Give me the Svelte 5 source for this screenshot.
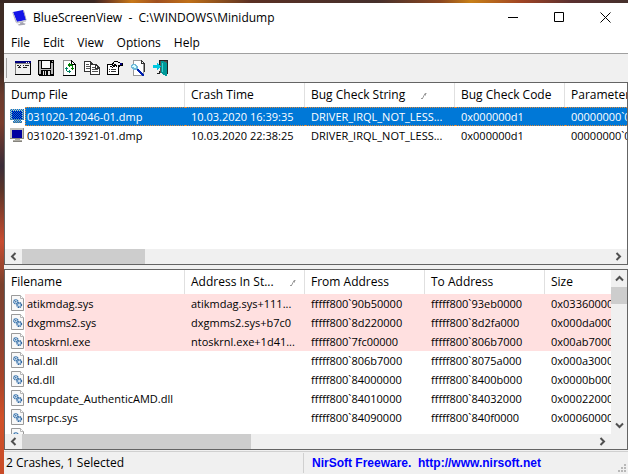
<script>
  const menus = ['File', 'Edit', 'View', 'Options', 'Help'];
  const tools = ['Advanced Options', 'Save', 'Refresh', 'Copy', 'Properties', 'Find', 'Exit'];
  const crashes = [
    ['031020-12046-01.dmp', '10.03.2020 16:39:35', 'DRIVER_IRQL_NOT_LESS...', '0x000000d1', '00000000`0'],
    ['031020-13921-01.dmp', '10.03.2020 22:38:25', 'DRIVER_IRQL_NOT_LESS...', '0x000000d1', '00000000`0']
  ];
  const modules = [
    ['atikmdag.sys', 'atikmdag.sys+111...', 'fffff800`90b50000', 'fffff800`93eb0000', '0x03360000', true],
    ['dxgmms2.sys', 'dxgmms2.sys+b7c0', 'fffff800`8d220000', 'fffff800`8d2fa000', '0x000da000', true],
    ['ntoskrnl.exe', 'ntoskrnl.exe+1d41...', 'fffff800`7fc00000', 'fffff800`806b7000', '0x00ab7000', true],
    ['hal.dll', '', 'fffff800`806b7000', 'fffff800`8075a000', '0x000a3000', false],
    ['kd.dll', '', 'fffff800`84000000', 'fffff800`8400b000', '0x0000b000', false],
    ['mcupdate_AuthenticAMD.dll', '', 'fffff800`84010000', 'fffff800`84032000', '0x00022000', false],
    ['msrpc.sys', '', 'fffff800`84090000', 'fffff800`840f0000', '0x00060000', false],
    ['', '', '', '', '', false]
  ];
  let selected = $state(0);
</script>

{#snippet sortMark()}
  <svg class="sort" width="6" height="6" viewBox="0 0 6 6" aria-hidden="true"><path d="M0 5.5h2M1.5 5.5L4 .5h1.5M4.5 .5v2" fill="none" stroke="#9a9a9a" /></svg>
{/snippet}

{#snippet chevron(d)}
  <svg width="9" height="9" viewBox="0 0 9 9" aria-hidden="true"><path {d} fill="none" stroke="#505050" stroke-width="2" /></svg>
{/snippet}

{#snippet screenIcon(on)}
  <svg class="ico" width="14" height="16" viewBox="0 0 14 16" shape-rendering="crispEdges" aria-hidden="true">
    <defs>
      <pattern id="dither" width="2" height="2" patternUnits="userSpaceOnUse"><path d="M0 0h1v1H0zM1 1h1v1H1z" fill="#0078d7" /></pattern>
    </defs>
    <path d="M0 1h14v11H0z" fill="#c4c2ba" /><path d="M13 1h1v11H0v-1h13z" fill="#8c8a84" />
    <path d="M2 3h10v8H2z" fill="#0000a0" />
    <path d="M5 12h5v1H5zM3 13h9v2H3z" fill="#b0aea6" /><path d="M3 14h9v1H3z" fill="#85837d" />
    {#if on}<path d="M0 1h14v11H12v3H3v-3H0z" fill="url(#dither)" />{/if}
  </svg>
{/snippet}

{#snippet fileIcon()}
  <svg class="ico file" width="13" height="16" viewBox="0 0 13 16" aria-hidden="true">
    <path d="M.5.5h9l3 3v12H.5z" fill="#f8f8f8" stroke="#9a9a9a" />
    <path d="M9.5.5v3h3" fill="#fff" stroke="#b5b5b5" />
    <circle cx="4.8" cy="6.8" r="2.1" fill="#d8e8f5" stroke="#3d76ad" stroke-width="1.4" stroke-dasharray="1.2 .5" />
    <circle cx="8.2" cy="10" r="2.3" fill="#a9c8e4" stroke="#3268a0" stroke-width="1.4" stroke-dasharray="1.2 .5" />
    <circle cx="4.8" cy="6.8" r=".7" fill="#23578c" /><circle cx="8.2" cy="10" r=".7" fill="#fff" />
  </svg>
{/snippet}

{#snippet toolIcon(i)}
  <svg width="16" height="16" viewBox="0 0 16 16" shape-rendering="crispEdges" aria-hidden="true">
    {#if i === 0}
      <path d="M0 1h16v14H0z" fill="#000" /><path d="M0 1h15v13H0z" fill="#808080" /><path d="M1 4h14v10H1z" fill="#f0f0f0" />
      <path d="M0 1h16v2H0z" fill="#000080" /><path d="M11 2h1v1h-1zM13 2h1v1h-1z" fill="#fff" />
      <path d="M2 5h2v1H2zM5 5h1v1H5zM3 7h1V6h1v1h1v1H3zM8 5h1v1H8zM10 5h4v1h-4zM8 7h4v1H8z" fill="#222" />
    {:else if i === 1}
      <path d="M0 0h16v16H1v-1H0z" fill="#000" /><path d="M1 1h2v13H1zM13 3h2v11h-2zM14 1h1v1h-1z" fill="#b8b8b8" />
      <path d="M4 1h8v7H4z" fill="#f8f8f8" /><path d="M3 9h10v1H3z" fill="#b8b8b8" />
      <path d="M10 11h2v4h-2zM5 11h1v4H5zM7 11h1v4H7z" fill="#ddd" />
    {:else if i === 2}
      <path d="M2 0h8v1H3v14H2z" fill="#909090" /><path d="M3 1h7v4h4v10H3z" fill="#fff" />
      <path d="M14 4h1v12H2v-1h12z" fill="#000" /><path d="M10 0h1v1h1v1h1v1h1v1h1v1h-5z" fill="#000" /><path d="M11 2h1v1h1v1h-2z" fill="#fff" />
      <path d="M8 3h1v1h2v1h1v3h1v1h-1v1h-1V9h-1V8h1V6H9v1H8V6H7V4h1z" fill="#008000" />
      <path d="M5 7h1v1h1v1H6v2h2v-1h1v1h1v1H9v1H8v-1H6v-1H5V9H4V8h1z" fill="#008060" />
    {:else if i === 3}
      <path d="M0 1h6l3 3v8H0z" fill="#333" /><path d="M1 2h5v3h2v6H1z" fill="#fff" /><path d="M2 4h3v1H2zM2 6h5v1H2zM2 8h5v1H2z" fill="#555" />
      <path d="M6 4h6l4 4v7H6z" fill="#333" /><path d="M7 5h4v4h4v5H7zM12 6h1v2h-1z" fill="#fff" /><path d="M8 7h3v1H8zM8 9h6v1H8zM8 11h6v1H8z" fill="#555" />
    {:else if i === 4}
      <path d="M0 4h12v11H0z" fill="#000" /><path d="M1 5h10v9H1z" fill="#fff" />
      <path d="M2 9h1v1H2zM4 9h5v1H4zM2 11h1v1H2zM4 11h5v1H4z" fill="#333" />
      <path d="M7 1h4v1h2v1h3v3h-3v1h-2V6h-1v1H9V6H8v1H6v1H5V7h1V6H5v1H3V6h2V5H3V4h2V3h1V2h1z" fill="#000" />
      <path d="M7 2h4v1h2v2h-2v1h-1V5H9V4H7v1H6V4h1z" fill="#f0f0f0" />
      <path d="M13 3h2v2h-2z" fill="#000080" />
    {:else if i === 5}
      <path d="M3 0h8l3 3v13H3z" fill="#999" /><path d="M4 1h7v3h2v11H4z" fill="#fff" /><path d="M11 0h1v1h1v1h1v1h1v9h-1V4h-3z" fill="#333" /><path d="M12 2h1v1h-1z" fill="#fff" />
      <path d="M2 4h4v1h1v1h1v3H7v1H3V9H2V8H1V5h1z" fill="#70b8d8" /><path d="M3 5h2v1h1v2H4V7H2V6h1z" fill="#d8ffff" />
      <path d="M7 9h2v1h1v1h1v1h1v1h1v1h1v2h-2v-1h-1v-1h-1v-1H9v-1H8v-1H7z" fill="#0020b0" />
    {:else}
      <path d="M6 0h9v14h-1V1H7v6H6z" fill="#222" /><path d="M7 1h7v12H7z" fill="#555" /><path d="M8 1h2l4 2v13h-1l-5-3z" fill="#009898" /><path d="M9 3h1v9H9z" fill="#40d0d0" />
      <path d="M6 11h1v3H4v-1h2z" fill="#222" /><path d="M0 5h4V3h1v1h1v1h1v1h1v1H7v1H6v1H5v1H4V8H0z" fill="#00c8e0" />
    {/if}
  </svg>
{/snippet}

<div class="desktop">
  <main class="window">
    <header class="title">
      <svg width="16" height="16" viewBox="0 0 16 16" aria-hidden="true">
        <path d="M1 2l10-2 3 10-9 2z" fill="#1414e8" /><path d="M1 2l-.8.4L3.5 12l1.5.2z" fill="#b8b8c8" /><path d="M11 0l1 .5 2.5 9.5-.5.5z" fill="#9090b0" />
        <path d="M3.5 12l10.5-2v1.4l-9 2z" fill="#c5c5cd" /><path d="M8 12.6l3-.7.6 1.3 1.9.2-.5 1.4-6 .7-1.4-.8 2.6-1z" fill="#a5a5b2" />
      </svg>
      <h1>BlueScreenView&nbsp; -&nbsp; C:\WINDOWS\Minidump</h1>
      <div class="controls">
        <button aria-label="Minimize"><svg width="11" height="11" viewBox="0 0 11 11"><path d="M0 5.5h10" stroke="#000" /></svg></button>
        <button aria-label="Maximize"><svg width="11" height="11" viewBox="0 0 11 11"><path d="M.5.5h9v9h-9z" fill="none" stroke="#000" /></svg></button>
        <button aria-label="Close"><svg width="11" height="11" viewBox="0 0 11 11"><path d="M.5.5l10 10M10.5.5l-10 10" stroke="#000" /></svg></button>
      </div>
    </header>
    <nav class="menu">
      {#each menus as m}<button>{m}</button>{/each}
    </nav>
    <div class="toolbar" role="toolbar" aria-label="Tools">
      {#each tools as t, i}<button aria-label={t}>{@render toolIcon(i)}</button>{/each}
    </div>

    <section class="pane upper">
      <div class="view">
        <table class="crashes">
          <colgroup><col class="w180" /><col class="w120" /><col class="w150" /><col class="w110" /><col class="w120" /></colgroup>
          <thead>
            <tr><th>Dump File</th><th>Crash Time</th><th>Bug Check String {@render sortMark()}</th><th>Bug Check Code</th><th>Parameter</th></tr>
          </thead>
          <tbody>
            {#each crashes as row, r}
              <tr class:selected={selected === r} onclick={() => (selected = r)}>
                <td class="name"><div>{@render screenIcon(selected === r)}<span>{row[0]}</span></div></td>
                {#each row.slice(1) as cell}<td>{cell}</td>{/each}
              </tr>
            {/each}
          </tbody>
        </table>
      </div>
      <div class="hbar">
        <button aria-label="Scroll left">{@render chevron('M6.5 1L3 4.5 6.5 8')}</button>
        <div class="track"><div class="thumb short"></div></div>
        <button aria-label="Scroll right">{@render chevron('M2.5 1L6 4.5 2.5 8')}</button>
      </div>
    </section>

    <section class="pane lower">
      <div class="middle">
        <div class="view">
          <table class="modules">
            <colgroup><col class="w180" /><col class="w120" /><col class="w120" /><col class="w120" /><col class="w120" /></colgroup>
            <thead>
              <tr><th>Filename</th><th>Address In St... {@render sortMark()}</th><th>From Address</th><th>To Address</th><th>Size</th></tr>
            </thead>
            <tbody>
              {#each modules as row}
                <tr class:flagged={row[5]}>
                  <td class="name"><div>{@render fileIcon()}<span>{row[0]}</span></div></td>
                  {#each row.slice(1, 5) as cell}<td>{cell}</td>{/each}
                </tr>
              {/each}
            </tbody>
          </table>
        </div>
        <div class="vbar">
          <button aria-label="Scroll up">{@render chevron('M1 6.5L4.5 3 8 6.5')}</button>
          <div class="track"><div class="thumb"></div></div>
          <button aria-label="Scroll down">{@render chevron('M1 2.5L4.5 6 8 2.5')}</button>
        </div>
      </div>
      <div class="hbar inset">
        <button aria-label="Scroll left">{@render chevron('M6.5 1L3 4.5 6.5 8')}</button>
        <div class="track"><div class="thumb long"></div></div>
        <button aria-label="Scroll right">{@render chevron('M2.5 1L6 4.5 2.5 8')}</button>
      </div>
    </section>

    <footer>
      <div class="count">2 Crashes, 1 Selected</div>
      <a href="http://www.nirsoft.net">NirSoft Freeware.&nbsp; http://www.nirsoft.net</a>
      <svg width="9" height="9" viewBox="0 0 9 9" aria-hidden="true"><path d="M6 0h2v2H6zM3 3h2v2H3zM6 3h2v2H6zM0 6h2v2H0zM3 6h2v2H3zM6 6h2v2H6z" fill="#b8b8b8" /></svg>
    </footer>
  </main>
</div>

<style>
  .desktop {
    box-sizing: border-box;
    height: 100vh;
    padding: 3px 0 0 4px;
    overflow: hidden;
    background:
      linear-gradient(90deg, #3a2722 0 15%, #6f3a20 17%, #c87818 21%, #a05020 25%, #c07018 30%, #5a3024 40%, #45302c 60%, #8a4520 70%, #c88018 75%, #a04424 83%, #5a3030 91%, #45302c) top / 100% 3px no-repeat,
      linear-gradient(#3f2c24 0 15%, #6a3a2c 20%, #7a3c2c 26%, #3a2c38 35%, #5a3428 40%, #c84c30 51%, #7a402c 60%, #8a4030 70%, #a84428 80%, #d05028 88%, #c84c28);
    font: 12px/16px "Open Sans", "Noto Sans", sans-serif;
    color: #000;
  }
  .window {
    display: flex;
    flex-direction: column;
    height: 100%;
    background: #f0f0f0;
  }
  button {
    display: flex;
    align-items: center;
    justify-content: center;
    padding: 0;
    border: 0;
    background: none;
    font: inherit;
    color: inherit;
  }
  .title {
    display: flex;
    align-items: center;
    height: 29px;
    padding-left: 8px;
    background: #fff;
  }
  h1 {
    flex: 1;
    margin: 0 0 0 5px;
    font-size: 12px;
    font-weight: 400;
    white-space: nowrap;
  }
  .controls { display: flex; height: 100%; }
  .controls button { width: 46px; }
  .menu {
    display: flex;
    gap: 1px;
    height: 21px;
    padding-left: 1px;
    background: #fff;
    border-bottom: 1px solid #a0a0a0;
  }
  .menu button { padding: 0 6px; }
  .toolbar {
    display: flex;
    align-items: center;
    gap: 7px;
    height: 28px;
    flex: none;
    padding-left: 2px;
  }
  .toolbar::before {
    content: "";
    width: 1px;
    height: 20px;
    margin-right: 1px;
    background: #a0a0a0;
  }
  .pane {
    display: flex;
    flex-direction: column;
    min-height: 0;
    background: #fff;
    border: 1px solid #646464;
  }
  .upper { flex: 183 1 0; margin-bottom: 4px; }
  .lower { flex: 181 1 0; }
  .view { flex: 1; min-width: 0; min-height: 0; overflow: hidden; }
  table { table-layout: fixed; border-spacing: 0; }
  .crashes { width: 680px; }
  .modules { width: 660px; }
  .w180 { width: 180px; }
  .w150 { width: 150px; }
  .w120 { width: 120px; }
  .w110 { width: 110px; }
  th, td {
    box-sizing: border-box;
    padding: 0 6px;
    text-align: left;
    font-weight: 400;
    white-space: nowrap;
    overflow: hidden;
  }
  th { height: 24px; border-right: 1px solid #e0e0e0; }
  td { height: 19px; font-size: 11px; line-height: 17px; border: solid transparent; border-width: 1px 0; }
  .sort { margin-left: 13px; }
  td.name { padding: 0; border: 0; }
  .name div { display: flex; height: 19px; }
  .name span {
    box-sizing: border-box;
    flex: 1;
    padding-left: 1px;
    border: 1px solid transparent;
    border-right: 0;
  }
  .ico { flex: none; margin: 1px 1px 0 5px; }
  .file { margin-left: 6px; }
  .selected td, .selected span { color: #fff; background: #0078d7; border-color: #e08a3a; border-style: dotted; }
  .selected td.name { background: none; }
  .flagged td, .flagged span { background: #ffe0e0; }
  .flagged td.name { background: none; }
  .hbar { display: flex; height: 15px; flex: none; background: #f0f0f0; }
  .hbar button { width: 17px; }
  .inset { padding-right: 16px; }
  .track { flex: 1; }
  .thumb { background: #cdcdcd; }
  .hbar .thumb { height: 100%; }
  .short { width: 21%; }
  .long { width: 40%; }
  .middle { display: flex; flex: 1; min-height: 0; }
  .vbar { display: flex; flex-direction: column; width: 16px; background: #f0f0f0; }
  .vbar button { height: 17px; }
  .vbar .thumb { height: 17px; }
  footer {
    display: flex;
    align-items: center;
    height: 22px;
    flex: none;
    margin-top: 1px;
    border-top: 1px solid #d0d0d0;
  }
  .count { width: 297px; padding-left: 2px; line-height: 20px; border-right: 1px solid #d0d0d0; }
  footer a {
    flex: 1;
    padding-left: 8px;
    font: bold 12px/16px "Liberation Sans", sans-serif;
    color: #0000ff;
    text-decoration: none;
  }
  footer svg { align-self: flex-end; margin: 0 1px 1px 0; }
</style>
